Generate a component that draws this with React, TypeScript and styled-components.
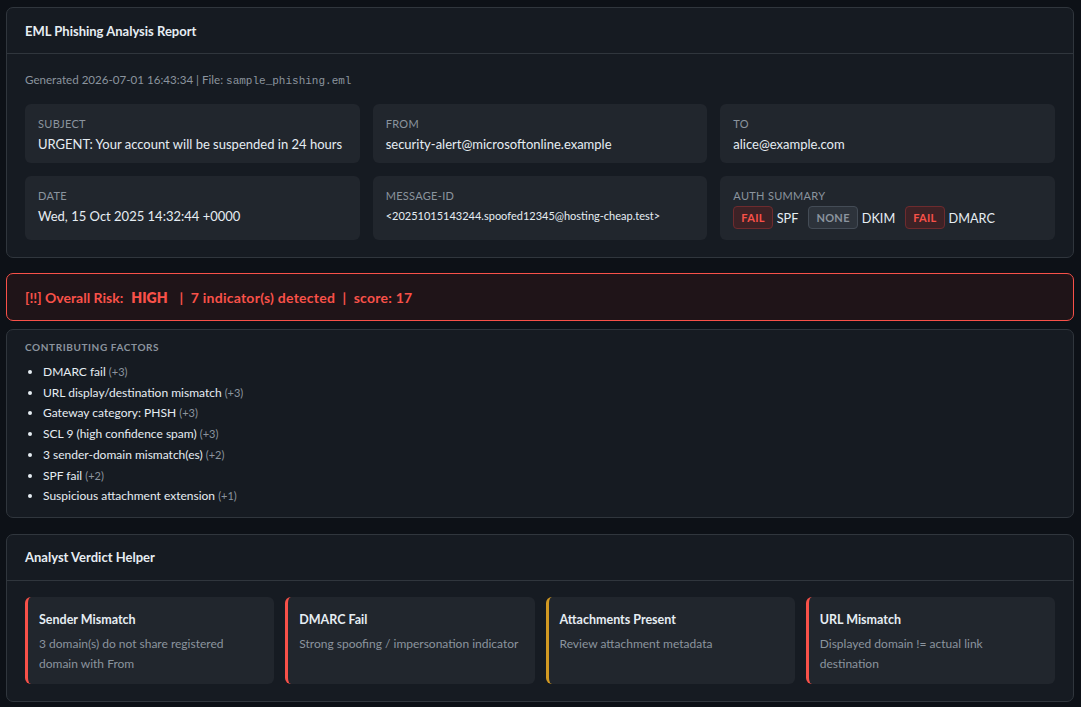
import React from "react";
import styled, { createGlobalStyle } from "styled-components";

const Global = createGlobalStyle`
  * { box-sizing: border-box; }
  html, body { margin: 0; padding: 0; background: #0d1117; }
  body {
    font-family: "Segoe UI", Lato, "Noto Sans", sans-serif;
    color: #e6edf3;
  }
`;

const Page = styled.div`
  padding: 7px 7px 7px 6px;
  display: flex;
  flex-direction: column;
`;

const Panel = styled.section<{ $mb?: number }>`
  background: #161b22;
  border: 1px solid #30363d;
  border-radius: 7px;
  margin-bottom: ${(p) => p.$mb ?? 16}px;
`;

const PanelHeader = styled.div`
  height: 46px;
  padding: 0 18px;
  display: flex;
  align-items: center;
  border-bottom: 1px solid #30363d;
  font-size: 13px;
  font-weight: 700;
  color: #e6edf3;
`;

const PanelBody = styled.div<{ $pt?: number; $pb?: number }>`
  padding: ${(p) => p.$pt ?? 16}px 18px ${(p) => p.$pb ?? 17}px 18px;
`;

const Meta = styled.div`
  font-size: 11.6px;
  color: #8b949e;
  margin-top: 3px;
  margin-bottom: 17px;
`;

const Mono = styled.span`
  font-family: "Liberation Mono", "DejaVu Sans Mono", monospace;
  font-size: 11px;
`;

const Grid = styled.div`
  display: grid;
  grid-template-columns: repeat(3, 1fr);
  gap: 13px;
`;

const Card = styled.div<{ $h: number }>`
  background: #21262d;
  border-radius: 6px;
  padding: 13px 13px 0 13px;
  height: ${(p) => p.$h}px;
`;

const Label = styled.div`
  font-size: 11px;
  color: #8b949e;
  text-transform: uppercase;
  letter-spacing: 0.3px;
  line-height: 14px;
  margin-bottom: 3px;
`;

const Value = styled.div<{ $small?: boolean }>`
  font-size: ${(p) => (p.$small ? 11 : 13)}px;
  color: #e6edf3;
  line-height: 20px;
`;

const AuthRow = styled.div`
  display: flex;
  align-items: center;
`;

const AuthItem = styled.span`
  display: inline-flex;
  align-items: center;
  gap: 4px;
  margin-right: 10px;
  font-size: 12.7px;
  color: #e6edf3;
`;

const Badge = styled.span<{ $kind: "fail" | "none" }>`
  display: inline-flex;
  align-items: center;
  justify-content: center;
  height: 23px;
  padding: 0 7px;
  border-radius: 4px;
  font-size: 11px;
  font-weight: 700;
  letter-spacing: 0.3px;
  color: ${(p) => (p.$kind === "fail" ? "#f85149" : "#8b949e")};
  background: ${(p) => (p.$kind === "fail" ? "#3d2226" : "#2d333b")};
  border: 1px solid ${(p) => (p.$kind === "fail" ? "#6e2b2e" : "#444c56")};
`;

const RiskBanner = styled.div`
  height: 48px;
  border: 1px solid #f85149;
  border-radius: 7px;
  background: #1f1418;
  display: flex;
  align-items: center;
  padding: 0 18px;
  font-size: 14px;
  font-weight: 700;
  color: #f85149;
  margin-bottom: 8px;
  white-space: pre;
`;

const RiskLevel = styled.span`
  font-size: 14px;
  font-weight: 800;
  margin: 0 12px 0 8px;
`;

const ScoreText = styled.span`
  letter-spacing: 0.25px;
`;

const SectionTitle = styled.div`
  font-size: 10px;
  font-weight: 700;
  letter-spacing: 0.6px;
  text-transform: uppercase;
  color: #8b949e;
  margin-bottom: 9px;
`;

const FactorList = styled.ul`
  margin: 0;
  padding: 0 0 0 18px;
  font-size: 12px;
  color: #e6edf3;
  line-height: 20.7px;
  li::marker { color: #e6edf3; }
`;

const Weight = styled.span`
  color: #8b949e;
  font-size: 11px;
`;

const VerdictGrid = styled.div`
  display: grid;
  grid-template-columns: repeat(4, 1fr);
  gap: 11px;
`;

const VerdictCard = styled.div<{ $accent: string }>`
  background: #21262d;
  border-radius: 6px;
  border-left: 3px solid ${(p) => p.$accent};
  height: 87px;
  padding: 14px 12px 0 11px;
`;

const VTitle = styled.div`
  font-size: 12.5px;
  font-weight: 700;
  color: #e6edf3;
  line-height: 18px;
  margin-bottom: 5px;
`;

const VDesc = styled.div`
  font-size: 12px;
  color: #8b949e;
  line-height: 20px;
`;

const RED = "#f85149";
const YELLOW = "#d29922";

const factors: [string, string][] = [
  ["DMARC fail", "(+3)"],
  ["URL display/destination mismatch", "(+3)"],
  ["Gateway category: PHSH", "(+3)"],
  ["SCL 9 (high confidence spam)", "(+3)"],
  ["3 sender-domain mismatch(es)", "(+2)"],
  ["SPF fail", "(+2)"],
  ["Suspicious attachment extension", "(+1)"],
];

const verdicts = [
  { t: "Sender Mismatch", d: "3 domain(s) do not share registered domain with From", c: RED },
  { t: "DMARC Fail", d: "Strong spoofing / impersonation indicator", c: RED },
  { t: "Attachments Present", d: "Review attachment metadata", c: YELLOW },
  { t: "URL Mismatch", d: "Displayed domain != actual link destination", c: RED },
];

export default function App() {
  return (
    <>
      <Global />
      <Page>
        <Panel $mb={15}>
          <PanelHeader>EML Phishing Analysis Report</PanelHeader>
          <PanelBody>
            <Meta>
              Generated 2026-07-01 16:43:34 | File: <Mono>sample_phishing.eml</Mono>
            </Meta>
            <Grid>
              <Card $h={59}>
                <Label>Subject</Label>
                <Value>URGENT: Your account will be suspended in 24 hours</Value>
              </Card>
              <Card $h={59}>
                <Label>From</Label>
                <Value>security-alert@microsoftonline.example</Value>
              </Card>
              <Card $h={59}>
                <Label>To</Label>
                <Value>alice@example.com</Value>
              </Card>
              <Card $h={64}>
                <Label>Date</Label>
                <Value>Wed, 15 Oct 2025 14:32:44 +0000</Value>
              </Card>
              <Card $h={64}>
                <Label>Message-ID</Label>
                <Value $small>&lt;20251015143244.spoofed12345@hosting-cheap.test&gt;</Value>
              </Card>
              <Card $h={64}>
                <Label>Auth Summary</Label>
                <AuthRow>
                  <AuthItem>
                    <Badge $kind="fail">FAIL</Badge>SPF
                  </AuthItem>
                  <AuthItem>
                    <Badge $kind="none">NONE</Badge>DKIM
                  </AuthItem>
                  <AuthItem>
                    <Badge $kind="fail">FAIL</Badge>DMARC
                  </AuthItem>
                </AuthRow>
              </Card>
            </Grid>
          </PanelBody>
        </Panel>

        <RiskBanner>
          [!!] Overall Risk:<RiskLevel>HIGH</RiskLevel>
          <ScoreText>|  7 indicator(s) detected  |  score: 17</ScoreText>
        </RiskBanner>

        <Panel>
          <PanelBody $pt={11} $pb={10}>
            <SectionTitle>Contributing Factors</SectionTitle>
            <FactorList>
              {factors.map(([t, w]) => (
                <li key={t}>
                  {t} <Weight>{w}</Weight>
                </li>
              ))}
            </FactorList>
          </PanelBody>
        </Panel>

        <Panel $mb={0}>
          <PanelHeader>Analyst Verdict Helper</PanelHeader>
          <PanelBody>
            <VerdictGrid>
              {verdicts.map((v) => (
                <VerdictCard key={v.t} $accent={v.c}>
                  <VTitle>{v.t}</VTitle>
                  <VDesc>{v.d}</VDesc>
                </VerdictCard>
              ))}
            </VerdictGrid>
          </PanelBody>
        </Panel>
      </Page>
    </>
  );
}
